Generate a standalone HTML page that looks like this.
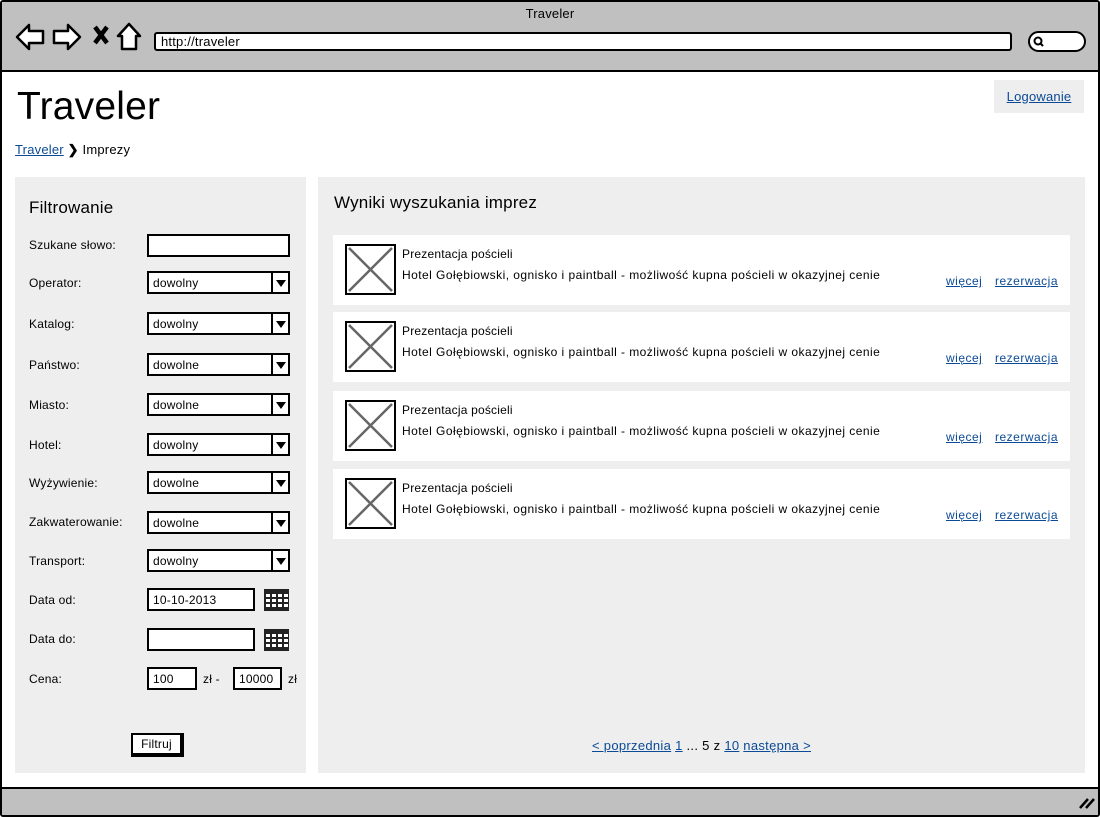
<!DOCTYPE html>
<html><head><meta charset="utf-8"><style>
*{margin:0;padding:0;box-sizing:border-box}
body{width:1100px;height:817px;position:relative;overflow:hidden;background:#fff;font-family:"Liberation Sans",sans-serif;font-size:12px;color:#000;letter-spacing:0.2px}
.a{position:absolute}
a{color:#0b4a96;text-decoration:underline}
.lbl{position:absolute;left:29px;font-size:12px}
.in{position:absolute;left:147px;width:143px;height:23px;border:2px solid #000;background:#fff;font-size:12px;padding:3px 4px;line-height:14px}
.sel .arr{position:absolute;right:0;top:0;width:17px;height:19px;border-left:2px solid #000}
.sel .arr:after{content:"";position:absolute;left:3px;top:7px;border-left:5px solid transparent;border-right:5px solid transparent;border-top:7px solid #000}
.cal{position:absolute;left:264px;width:25px;height:22px;background:#222}
.cal i{position:absolute;background:#fff;width:4px;height:3px}
.card{position:absolute;left:333px;width:737px;height:70px;background:#fff}
.img{position:absolute;left:12px;top:9px;width:51px;height:51px;border:2px solid #000}
.card .t{position:absolute;left:69px;top:12px}
.card .d{position:absolute;left:69px;top:33px;letter-spacing:0.45px}
.card .w{position:absolute;left:613px;top:39px;letter-spacing:0.5px}
.card .r{position:absolute;left:662px;top:39px;letter-spacing:0.5px}
</style></head><body>
<div class="a" style="left:0;top:0;width:1100px;height:817px;border:2px solid #000;border-radius:3px"></div>
<div class="a" style="left:2px;top:2px;width:1096px;height:70px;background:#c0c0c0;border-bottom:2px solid #000"></div>
<div class="a" style="left:0;top:6px;width:1100px;text-align:center;font-size:13px">Traveler</div>
<svg class="a" style="left:14px;top:22px" width="135" height="30" viewBox="0 0 135 30">
<path d="M3 15 L15 3 L15 9 L29 9 L29 21 L15 21 L15 27 Z" fill="#fff" stroke="#000" stroke-width="2.5" stroke-linejoin="round"/>
<path d="M66 15 L54 3 L54 9 L40 9 L40 21 L54 21 L54 27 Z" fill="#fff" stroke="#000" stroke-width="2.5" stroke-linejoin="round"/>
<path d="M81 5 L93 21 M93 5 L81 21" stroke="#000" stroke-width="4.5"/>
<path d="M115 2 L104 14 L108 14 L108 27 L122 27 L122 14 L126 14 Z" fill="#fff" stroke="#000" stroke-width="2.5" stroke-linejoin="round"/>
</svg>
<div class="a" style="left:154px;top:32px;width:858px;height:19px;background:#fff;border:2px solid #000;border-radius:3px;font-size:13px;padding-left:5px;line-height:15px">http://traveler</div>
<div class="a" style="left:1028px;top:31px;width:58px;height:21px;background:#fff;border:2px solid #000;border-radius:11px"></div>
<svg class="a" style="left:1032px;top:35px" width="14" height="14"><circle cx="6" cy="6" r="3.5" fill="none" stroke="#000" stroke-width="2"/><path d="M8.5 8.5 L11 11" stroke="#000" stroke-width="2"/></svg>
<div class="a" style="left:2px;top:787px;width:1096px;height:28px;background:#c0c0c0;border-top:2px solid #000"></div>
<svg class="a" style="left:1078px;top:796px" width="18" height="14"><path d="M2 12 L10 3 M8 12 L16 3" stroke="#000" stroke-width="2.5"/></svg>
<div class="a" style="left:17px;top:84px;font-size:39px;line-height:46px">Traveler</div>
<div class="a" style="left:994px;top:80px;width:90px;height:33px;background:#eeeeee;text-align:center;line-height:33px;font-size:13px"><a>Logowanie</a></div>
<div class="a" style="left:15px;top:142px;font-size:13px"><a>Traveler</a> <b>&#x276F;</b> Imprezy</div>
<div class="a" style="left:15px;top:177px;width:291px;height:596px;background:#eeeeee"></div>
<div class="a" style="left:318px;top:177px;width:767px;height:596px;background:#eeeeee"></div>
<div class="a" style="left:29px;top:198px;font-size:17px">Filtrowanie</div>
<div class="lbl" style="top:238px">Szukane słowo:</div><div class="in" style="top:234px"></div>
<div class="lbl" style="top:276px">Operator:</div><div class="in sel" style="top:271px">dowolny<span class="arr"></span></div>
<div class="lbl" style="top:317px">Katalog:</div><div class="in sel" style="top:312px">dowolny<span class="arr"></span></div>
<div class="lbl" style="top:358px">Państwo:</div><div class="in sel" style="top:353px">dowolne<span class="arr"></span></div>
<div class="lbl" style="top:398px">Miasto:</div><div class="in sel" style="top:393px">dowolne<span class="arr"></span></div>
<div class="lbl" style="top:438px">Hotel:</div><div class="in sel" style="top:433px">dowolny<span class="arr"></span></div>
<div class="lbl" style="top:476px">Wyżywienie:</div><div class="in sel" style="top:471px">dowolne<span class="arr"></span></div>
<div class="lbl" style="top:515px">Zakwaterowanie:</div><div class="in sel" style="top:511px">dowolne<span class="arr"></span></div>
<div class="lbl" style="top:554px">Transport:</div><div class="in sel" style="top:549px">dowolny<span class="arr"></span></div>
<div class="lbl" style="top:593px">Data od:</div><div class="in" style="top:588px;width:108px">10-10-2013</div>
<div class="cal" style="top:589px"></div>
<div class="lbl" style="top:632px">Data do:</div><div class="in" style="top:628px;width:108px"></div>
<div class="cal" style="top:629px"></div>
<div class="lbl" style="top:672px">Cena:</div>
<div class="in" style="top:667px;width:50px">100</div>
<div class="a" style="left:203px;top:672px">zł -</div>
<div class="in" style="top:667px;left:233px;width:49px">10000</div>
<div class="a" style="left:288px;top:672px">zł</div>
<div class="a" style="left:131px;top:733px;width:53px;height:24px;background:#fff;border:2px solid #000;border-right-width:4px;border-bottom-width:4px;text-align:center;line-height:18px">Filtruj</div>
<div class="a" style="left:334px;top:193px;font-size:17px">Wyniki wyszukania imprez</div>
<div class="card" style="top:235px"><div class="img"><svg width="47" height="47"><path d="M2 2L45 45M45 2L2 45" stroke="#666" stroke-width="2.5"/></svg></div><div class="t">Prezentacja pościeli</div><div class="d">Hotel Gołębiowski, ognisko i paintball - możliwość kupna pościeli w okazyjnej cenie</div><a class="w">więcej</a><a class="r">rezerwacja</a></div>
<div class="card" style="top:312px"><div class="img"><svg width="47" height="47"><path d="M2 2L45 45M45 2L2 45" stroke="#666" stroke-width="2.5"/></svg></div><div class="t">Prezentacja pościeli</div><div class="d">Hotel Gołębiowski, ognisko i paintball - możliwość kupna pościeli w okazyjnej cenie</div><a class="w">więcej</a><a class="r">rezerwacja</a></div>
<div class="card" style="top:391px"><div class="img"><svg width="47" height="47"><path d="M2 2L45 45M45 2L2 45" stroke="#666" stroke-width="2.5"/></svg></div><div class="t">Prezentacja pościeli</div><div class="d">Hotel Gołębiowski, ognisko i paintball - możliwość kupna pościeli w okazyjnej cenie</div><a class="w">więcej</a><a class="r">rezerwacja</a></div>
<div class="card" style="top:469px"><div class="img"><svg width="47" height="47"><path d="M2 2L45 45M45 2L2 45" stroke="#666" stroke-width="2.5"/></svg></div><div class="t">Prezentacja pościeli</div><div class="d">Hotel Gołębiowski, ognisko i paintball - możliwość kupna pościeli w okazyjnej cenie</div><a class="w">więcej</a><a class="r">rezerwacja</a></div>
<div class="a" style="left:592px;top:738px;font-size:13px;letter-spacing:0.3px"><a>&lt; poprzednia</a> <a>1</a> ... 5 z <a>10</a> <a>następna &gt;</a></div>
<script>
document.querySelectorAll('.cal').forEach(c=>{for(let r=0;r<3;r++)for(let k=0;k<4;k++){const i=document.createElement('i');i.style.left=(2+k*6)+'px';i.style.top=(5+r*5)+'px';c.appendChild(i);}});
</script>
</body></html>
